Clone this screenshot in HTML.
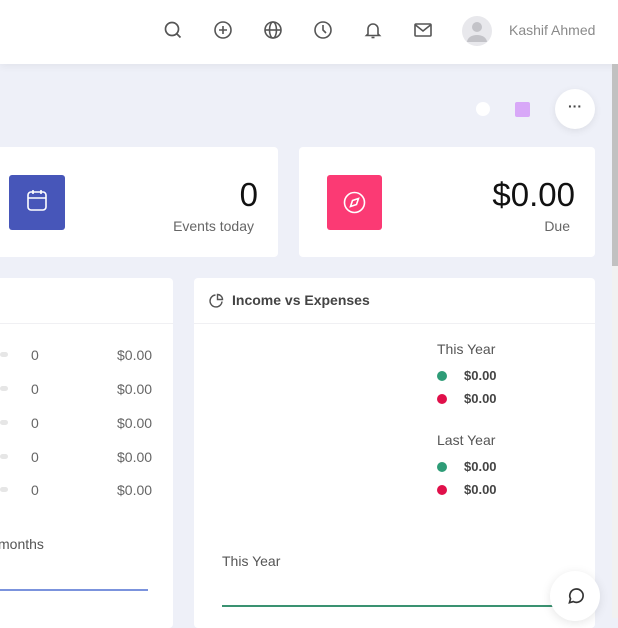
<!DOCTYPE html>
<html><head><meta charset="utf-8"><style>
*{margin:0;padding:0;box-sizing:border-box}
body{width:618px;height:618px;overflow:hidden;background:#eef0f8;font-family:"Liberation Sans",sans-serif;position:relative}
.hdr{position:absolute;left:0;top:0;width:618px;height:64px;background:#fff;box-shadow:0 2px 8px rgba(0,0,0,.06)}
.ic{position:absolute;top:20px;width:20px;height:20px}
.card{position:absolute;background:#fff;border-radius:4px}
.t{position:absolute;white-space:nowrap}
</style></head><body>
<div class="hdr">
<svg class="ic" style="left:163px" viewBox="0 0 20 20" fill="none" stroke="#555" stroke-width="1.7"><circle cx="9" cy="9" r="6.5"/><path d="M14 14l3.5 3.5"/></svg>
<svg class="ic" style="left:213px" viewBox="0 0 20 20" fill="none" stroke="#555" stroke-width="1.6"><circle cx="10" cy="10" r="8"/><path d="M10 6v8M6 10h8"/></svg>
<svg class="ic" style="left:263px" viewBox="0 0 20 20" fill="none" stroke="#555" stroke-width="1.6"><circle cx="10" cy="10" r="8"/><ellipse cx="10" cy="10" rx="3.5" ry="8"/><path d="M2 10h16"/></svg>
<svg class="ic" style="left:313px" viewBox="0 0 20 20" fill="none" stroke="#555" stroke-width="1.6"><circle cx="10" cy="10" r="8"/><path d="M10 5v5l3 3"/></svg>
<svg class="ic" style="left:363px" viewBox="0 0 20 20" fill="none" stroke="#555" stroke-width="1.6"><path d="M5 14V9a5 5 0 0110 0v5l1.5 1.5h-13z"/><path d="M8.5 17.5h3"/></svg>
<svg class="ic" style="left:413px" viewBox="0 0 20 20" fill="none" stroke="#555" stroke-width="1.6"><rect x="2" y="4" width="16" height="12" rx="1"/><path d="M2.5 5l7.5 6 7.5-6"/></svg>
<svg style="position:absolute;left:462px;top:16px" width="30" height="30" viewBox="0 0 30 30"><circle cx="15" cy="15" r="15" fill="#e8e8ec"/><circle cx="15" cy="11" r="5" fill="#c3c3c8"/><path d="M5 26a10 7 0 0120 0z" fill="#c3c3c8"/></svg>
<div class="t" style="left:509px;top:22px;font-size:14px;color:#8a8a8a">Kashif Ahmed</div>
</div>
<div style="position:absolute;left:612px;top:64px;width:6px;height:554px;background:#f1f1f1"></div>
<div style="position:absolute;left:612px;top:64px;width:6px;height:202px;background:#c1c1c1"></div>
<div style="position:absolute;left:476px;top:102px;width:14px;height:14px;border-radius:50%;background:#fff"></div>
<div style="position:absolute;left:515px;top:102px;width:15px;height:15px;border-radius:2px;background:#d8a8f8"></div>
<div style="position:absolute;left:555px;top:89px;width:40px;height:40px;border-radius:50%;background:#fff;box-shadow:0 2px 8px rgba(0,0,0,.08);text-align:center;line-height:34px;font-size:14px;color:#444;font-weight:bold">···</div>

<div class="card" style="left:-10px;top:147px;width:288px;height:110px"></div>
<div style="position:absolute;left:9px;top:175px;width:56px;height:55px;border-radius:3px;background:#4756b9"></div>
<svg style="position:absolute;left:26px;top:189px" width="22" height="24" viewBox="0 0 22 24" fill="none" stroke="#fff" stroke-width="1.6"><rect x="2" y="3" width="18" height="18" rx="3"/><path d="M2 9h18M7 1v4M15 1v4"/></svg>
<div class="t" style="right:360px;top:176px;font-size:33px;color:#111">0</div>
<div class="t" style="right:364px;top:218px;font-size:14px;color:#666">Events today</div>

<div class="card" style="left:299px;top:147px;width:296px;height:110px"></div>
<div style="position:absolute;left:327px;top:175px;width:55px;height:55px;border-radius:3px;background:#fb3a74"></div>
<svg style="position:absolute;left:342px;top:190px" width="25" height="25" viewBox="0 0 25 25" fill="none" stroke="#fff" stroke-width="1.6"><circle cx="12.5" cy="12.5" r="10"/><path d="M16.5 8.5l-2 6-6 2 2-6z"/></svg>
<div class="t" style="right:43px;top:176px;font-size:33px;color:#111">$0.00</div>
<div class="t" style="right:48px;top:218px;font-size:14px;color:#666">Due</div>

<div class="card" style="left:-10px;top:278px;width:183px;height:350px"></div>
<div style="position:absolute;left:0;top:323px;width:173px;height:1px;background:#f0f0f3"></div>
<div style="font-size:14px;color:#666">
<div class="t" style="left:31px;top:347px">0</div><div class="t" style="left:117px;top:347px">$0.00</div>
<div class="t" style="left:31px;top:381px">0</div><div class="t" style="left:117px;top:381px">$0.00</div>
<div class="t" style="left:31px;top:415px">0</div><div class="t" style="left:117px;top:415px">$0.00</div>
<div class="t" style="left:31px;top:449px">0</div><div class="t" style="left:117px;top:449px">$0.00</div>
<div class="t" style="left:31px;top:482px">0</div><div class="t" style="left:117px;top:482px">$0.00</div>
<div class="t" style="left:-2px;top:536px;color:#555">months</div>
</div>
<div style="position:absolute;left:0;top:352px;width:8px;height:5px;border-radius:3px;background:#e6e6e6;box-shadow:0 34px 0 #e6e6e6,0 68px 0 #e6e6e6,0 102px 0 #e6e6e6,0 135px 0 #e6e6e6"></div>
<div style="position:absolute;left:0;top:589px;width:148px;height:2px;background:#7b93dd"></div>

<div class="card" style="left:194px;top:278px;width:401px;height:350px"></div>
<svg style="position:absolute;left:209px;top:293px" width="15" height="15" viewBox="0 0 15 15" fill="none" stroke="#555" stroke-width="1.4"><path d="M13 8.5A6 6 0 116.5 2"/><path d="M8.5 1.5A5 5 0 0113.5 6.5H8.5z"/></svg>
<div class="t" style="left:232px;top:292px;font-size:14px;font-weight:bold;color:#444">Income vs Expenses</div>
<div style="position:absolute;left:194px;top:323px;width:401px;height:1px;background:#f0f0f3"></div>
<div class="t" style="left:437px;top:341px;font-size:14px;color:#555">This Year</div>
<div class="t" style="left:437px;top:432px;font-size:14px;color:#555">Last Year</div>
<div style="position:absolute;left:437px;top:371px;width:10px;height:10px;border-radius:50%;background:#2e9c77"></div>
<div style="position:absolute;left:437px;top:394px;width:10px;height:10px;border-radius:50%;background:#e0104a"></div>
<div style="position:absolute;left:437px;top:462px;width:10px;height:10px;border-radius:50%;background:#2e9c77"></div>
<div style="position:absolute;left:437px;top:485px;width:10px;height:10px;border-radius:50%;background:#e0104a"></div>
<div style="font-size:13px;font-weight:bold;color:#444">
<div class="t" style="left:464px;top:368px">$0.00</div>
<div class="t" style="left:464px;top:391px">$0.00</div>
<div class="t" style="left:464px;top:459px">$0.00</div>
<div class="t" style="left:464px;top:482px">$0.00</div>
</div>
<div class="t" style="left:222px;top:553px;font-size:14px;color:#555">This Year</div>
<div style="position:absolute;left:222px;top:605px;width:340px;height:2px;background:#3a9271"></div>
<div style="position:absolute;left:550px;top:571px;width:50px;height:50px;border-radius:50%;background:#fff;box-shadow:0 2px 10px rgba(0,0,0,.1)"></div>
<svg style="position:absolute;left:565px;top:586px" width="20" height="20" viewBox="0 0 18 18" fill="none" stroke="#333" stroke-width="1.5"><path d="M4 15l1-3.5A6 6 0 1 1 7.5 14z"/></svg>
</body></html>
